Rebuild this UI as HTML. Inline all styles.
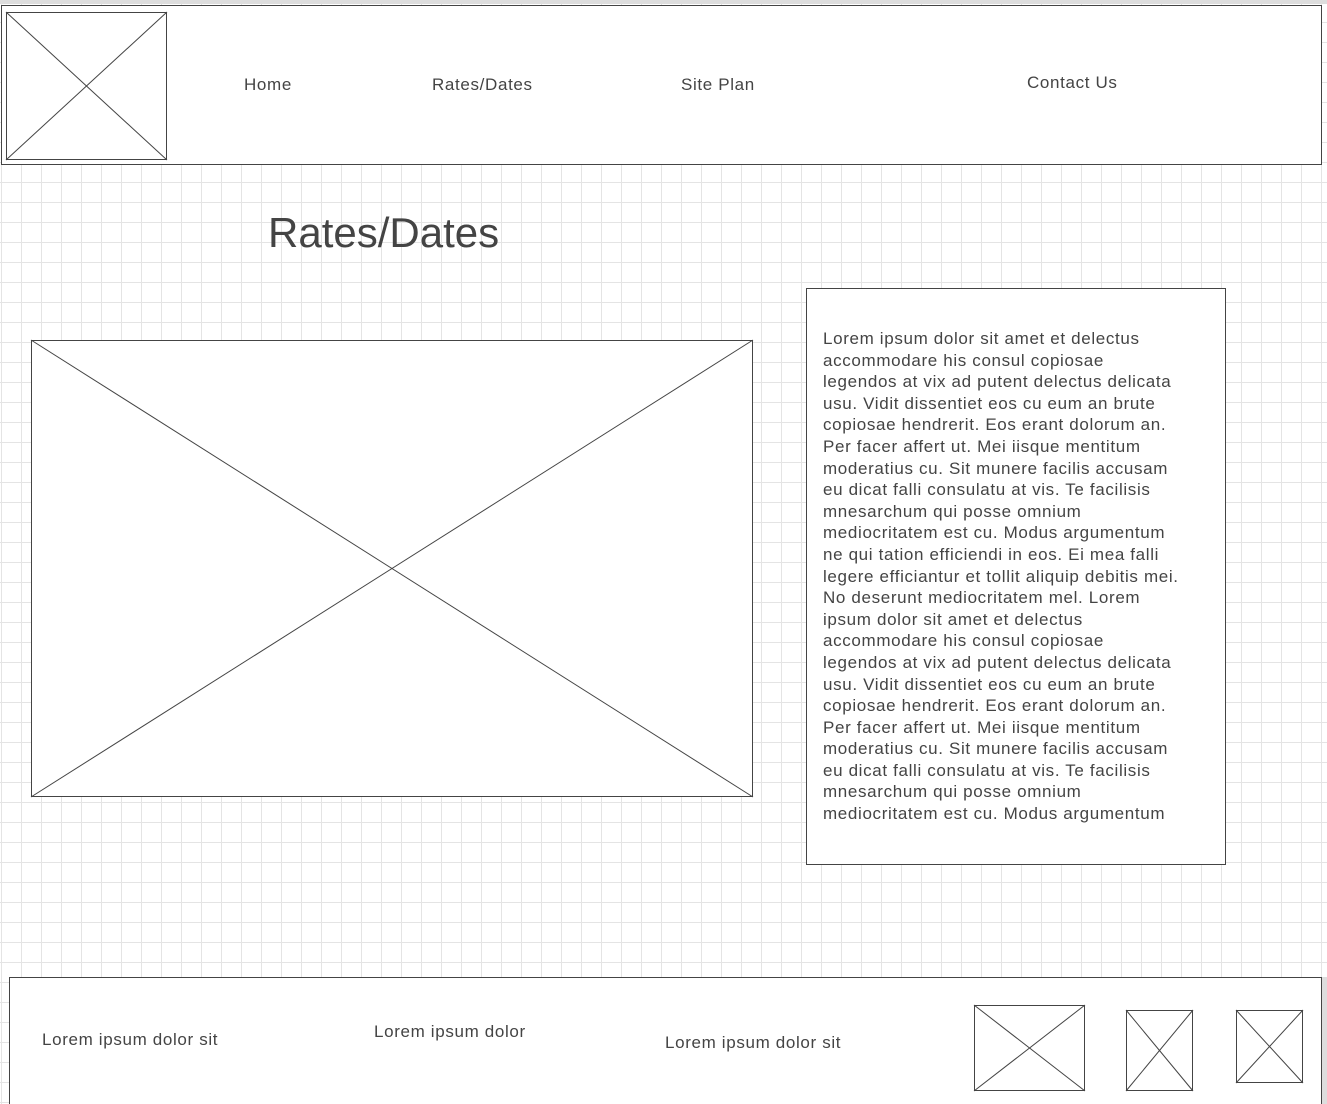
<!DOCTYPE html>
<html><head><meta charset="utf-8"><style>
html,body{margin:0;padding:0;overflow:hidden;height:1104px}
body{width:1327px;height:1104px;position:relative;overflow:hidden;background-color:#fff;
background-image:linear-gradient(to right,#e4e4e4 1px,transparent 1px),linear-gradient(to bottom,#e4e4e4 1px,transparent 1px);
background-size:20px 20px;background-position:1px 2px;font-family:"Liberation Sans",sans-serif;color:#444}
.b{position:absolute;box-sizing:border-box;border:1px solid #444;background:#fff}
svg.x{position:absolute;overflow:visible}
.t{position:absolute;white-space:nowrap;color:#444;letter-spacing:0.65px}
.p{position:absolute;left:823px;top:328px;font-size:17px;line-height:21.6px;white-space:pre;color:#444;letter-spacing:0.65px}
</style></head><body>
<div style="position:absolute;left:0;top:0;width:1327px;height:4px;background:#ddd"></div>
<div class="b" style="left:1px;top:5px;width:1321px;height:160px"></div>
<div class="b" style="left:6px;top:12px;width:161px;height:148px"></div>
<svg class="x" style="left:6px;top:12px" width="161" height="148"><line x1="0" y1="0" x2="161" y2="148" stroke="#444"/><line x1="161" y1="0" x2="0" y2="148" stroke="#444"/></svg>
<div class="t" style="left:244px;top:75px;font-size:17px">Home</div>
<div class="t" style="left:432px;top:75px;font-size:17px">Rates/Dates</div>
<div class="t" style="left:681px;top:75px;font-size:17px">Site Plan</div>
<div class="t" style="left:1027px;top:73px;font-size:17px">Contact Us</div>
<div class="t" style="left:268px;top:209px;font-size:42px;letter-spacing:0">Rates/Dates</div>
<div class="b" style="left:31px;top:340px;width:722px;height:457px"></div>
<svg class="x" style="left:31px;top:340px" width="722" height="457"><line x1="0" y1="0" x2="722" y2="457" stroke="#444"/><line x1="722" y1="0" x2="0" y2="457" stroke="#444"/></svg>
<div class="b" style="left:806px;top:288px;width:420px;height:577px"></div>
<div class="p">Lorem ipsum dolor sit amet et delectus
accommodare his consul copiosae
legendos at vix ad putent delectus delicata
usu. Vidit dissentiet eos cu eum an brute
copiosae hendrerit. Eos erant dolorum an.
Per facer affert ut. Mei iisque mentitum
moderatius cu. Sit munere facilis accusam
eu dicat falli consulatu at vis. Te facilisis
mnesarchum qui posse omnium
mediocritatem est cu. Modus argumentum
ne qui tation efficiendi in eos. Ei mea falli
legere efficiantur et tollit aliquip debitis mei.
No deserunt mediocritatem mel. Lorem
ipsum dolor sit amet et delectus
accommodare his consul copiosae
legendos at vix ad putent delectus delicata
usu. Vidit dissentiet eos cu eum an brute
copiosae hendrerit. Eos erant dolorum an.
Per facer affert ut. Mei iisque mentitum
moderatius cu. Sit munere facilis accusam
eu dicat falli consulatu at vis. Te facilisis
mnesarchum qui posse omnium
mediocritatem est cu. Modus argumentum</div>
<div class="b" style="left:9px;top:977px;width:1313px;height:140px"></div>
<div style="position:absolute;left:1322px;top:977px;width:5px;height:127px;background:#ddd"></div>
<div class="t" style="left:42px;top:1030px;font-size:17px">Lorem ipsum dolor sit</div>
<div class="t" style="left:374px;top:1022px;font-size:17px">Lorem ipsum dolor</div>
<div class="t" style="left:665px;top:1033px;font-size:17px">Lorem ipsum dolor sit</div>
<div class="b" style="left:974px;top:1005px;width:111px;height:86px"></div>
<svg class="x" style="left:974px;top:1005px" width="111" height="86"><line x1="0" y1="0" x2="111" y2="86" stroke="#444"/><line x1="111" y1="0" x2="0" y2="86" stroke="#444"/></svg>
<div class="b" style="left:1126px;top:1010px;width:67px;height:81px"></div>
<svg class="x" style="left:1126px;top:1010px" width="67" height="81"><line x1="0" y1="0" x2="67" y2="81" stroke="#444"/><line x1="67" y1="0" x2="0" y2="81" stroke="#444"/></svg>
<div class="b" style="left:1236px;top:1010px;width:67px;height:73px"></div>
<svg class="x" style="left:1236px;top:1010px" width="67" height="73"><line x1="0" y1="0" x2="67" y2="73" stroke="#444"/><line x1="67" y1="0" x2="0" y2="73" stroke="#444"/></svg>
</body></html>
